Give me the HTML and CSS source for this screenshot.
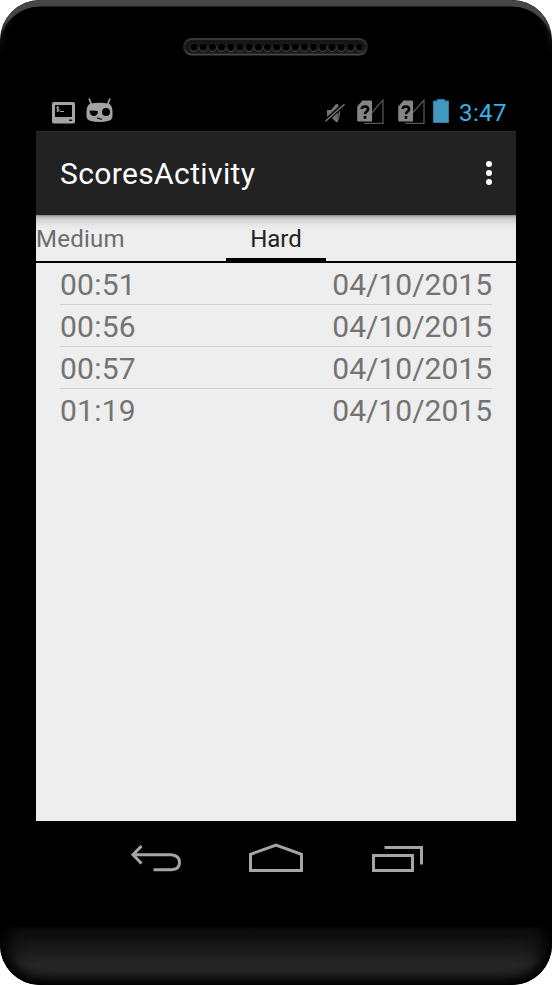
FILE: index.html
```html
<!DOCTYPE html>
<html lang="en">
<head>
<meta charset="utf-8">
<title>ScoresActivity</title>
<link rel="stylesheet" href="styles.css">
</head>
<body>
<div class="phone">
  <div class="top-bezel">
    <svg class="speaker" width="185" height="18" viewBox="0 0 185 18">
      <defs>
        <linearGradient id="rim" x1="0" y1="0" x2="0" y2="1"><stop offset="0" stop-color="#383838"/><stop offset=".5" stop-color="#202020"/><stop offset="1" stop-color="#444"/></linearGradient>
        <pattern id="holes" x="6.4" y="4" width="9.2" height="11" patternUnits="userSpaceOnUse">
          <circle cx="4.6" cy="5.9" r="4.2" fill="#484848"/><circle cx="4.6" cy="5" r="3.7" fill="#171717"/><circle cx="4.6" cy="5.400" r="3.300" fill="#000"/>
        </pattern>
      </defs>
      <rect x="1" y="1" width="183" height="15.500" rx="7.750" fill="#171717" stroke="url(#rim)" stroke-width="2"/>
      <rect x="6.400" y="4" width="174.800" height="11" fill="url(#holes)"/>
    </svg>
  </div>
  <div class="status-bar">
    <svg class="terminal" width="23" height="22" viewBox="0 0 23 22">
      <rect width="23" height="21.500" rx="1.800" fill="#a3a3a3"/>
      <rect x="3" y="3" width="17" height="12" fill="#000"/>
      <path d="M7 5H5v2h2v2H4.500M5.800 4v6M8 9.500h4" fill="none" stroke="#a3a3a3"/>
      <rect x="17" y="17.500" width="3" height="1.500" fill="#111"/>
    </svg>
    <svg class="cid" width="27" height="25" viewBox="0 0 27 25">
      <path d="M3 .5L5.300 6M24 .5L21.700 6" stroke="#a3a3a3" stroke-width="1.700"/>
      <path d="M4 5.800Q13.500 3.800 23 5.800Q26.500 7.500 26.500 14V18Q26.500 21.500 23 22.800Q13.500 25.300 4 22.800Q.5 21.500 .5 18V14Q.5 7.500 4 5.800Z" fill="#a3a3a3"/>
      <path d="M3.500 12.800Q7.500 12 12 13.300C12 19.500 3.800 19.800 3.500 12.800Z" fill="#000"/>
      <circle cx="20" cy="14" r="4" fill="#000"/>
      <path d="M11 20.200l2 .2 1.500.8H16" fill="none" stroke="#111" stroke-width="1.200"/>
    </svg>
    <span class="spacer"></span>
    <svg class="mute" width="20" height="22" viewBox="0 0 20 22">
      <path d="M2 8h4l5-6 2 0v18h-2l-5-5H2z" fill="#737373"/>
      <path d="M12 2Q15.500 6 14.500 12Q14 17 12 20Z" fill="#343434" stroke="#737373"/>
      <path d="M.5 19L19.500 2" stroke="#000" stroke-width="4"/>
      <path d="M.5 19.200L19.500 2.200" stroke="#777" stroke-width="1.500"/>
    </svg>
    <svg class="sim" width="27" height="25" viewBox="0 0 27 25">
      <path d="M7 24.400H26V1L14.500 14" fill="none" stroke="#555" stroke-width="1.300"/>
      <path d="M5.500 1.500H14Q15 1.500 15 2.500V22.500H1Q.2 22.500.2 21.500V7.500Z" fill="#858585"/>
      <path d="M4.700 10Q4.900 7.500 7.900 7.500Q11 7.500 11 10.200Q11 11.700 9.300 12.800Q8 13.700 8 15.200M8 17v2.700" fill="none" stroke="#000" stroke-width="2.600"/>
    </svg>
    <svg class="sim sim-two" width="27" height="25" viewBox="0 0 27 25">
      <path d="M7 24.400H26V1L14.500 14" fill="none" stroke="#555" stroke-width="1.300"/>
      <path d="M5.500 1.500H14Q15 1.500 15 2.500V22.500H1Q.2 22.500.2 21.500V7.500Z" fill="#858585"/>
      <path d="M4.700 10Q4.900 7.500 7.900 7.500Q11 7.500 11 10.200Q11 11.700 9.300 12.800Q8 13.700 8 15.200M8 17v2.700" fill="none" stroke="#000" stroke-width="2.600"/>
    </svg>
    <svg class="battery" width="16" height="24" viewBox="0 0 16 24"><path d="M4.300.5h7.400V2H15.500V23.500H.5V2H4.300Z" fill="#4099c0" stroke="#347d9d"/></svg>
    <span class="clock">3:47</span>
  </div>
  <div class="screen">
    <header class="app-bar">
      <h1>ScoresActivity</h1>
      <svg width="6" height="24" viewBox="0 0 6 24" fill="#fff"><circle cx="3" cy="3" r="3"/><circle cx="3" cy="12" r="3"/><circle cx="3" cy="21" r="3"/></svg>
    </header>
    <nav class="tabs">
      <span class="tab">Medium</span>
      <span class="tab selected">Hard</span>
    </nav>
    <ul class="scores">
      <li><span>00:51</span><span class="date">04/10/2015</span></li>
      <li><span>00:56</span><span class="date">04/10/2015</span></li>
      <li><span>00:57</span><span class="date">04/10/2015</span></li>
      <li><span>01:19</span><span class="date">04/10/2015</span></li>
    </ul>
  </div>
  <div class="nav-bar">
    <svg width="50" height="28" viewBox="0 0 50 28" fill="none" stroke="#a5a5a5" stroke-width="3"><path d="M10.500 1L2 9.700L10.500 18.500M2.500 9.700H40.500Q48.500 10.500 48.500 17.500T40.500 24.800H22.500"/></svg>
    <svg class="home" width="54" height="30" viewBox="0 0 54 30" fill="none" stroke="#a5a5a5" stroke-width="3"><path d="M1.500 27.500V11.300L27 2L52.500 11.300V27.500Z"/></svg>
    <svg width="52" height="28" viewBox="0 0 52 28" fill="none" stroke="#a5a5a5" stroke-width="3"><path d="M1.500 10.500H40.500V25.500H1.500ZM12.500 2.500H49.500V19.500"/></svg>
  </div>
  <div class="chin"></div>
</div>
</body>
</html>
```
FILE: styles.css
```css
* { box-sizing: border-box; }
body { margin: 0; background: #fff; font-family: Roboto, "Liberation Sans", sans-serif; }
.phone {
  width: 552px; height: 985px; overflow: hidden;
  border-radius: 40px; background: #000;
  display: flex; flex-direction: column;
}
.top-bezel {
  height: 93px; flex: none; padding: 38px 0 0 183px;
  border-radius: 40px 40px 0 0;
  box-shadow: inset 0 7px 0 -0.5px #464646, inset 7px 3px 6px -5px #262626, inset -7px 3px 6px -5px #262626;
  -webkit-mask-image: linear-gradient(#000 20%, transparent 60%), linear-gradient(#000, #000);
  mask-image: linear-gradient(#000 20%, transparent 60%), linear-gradient(#000, #000);
  -webkit-mask-size: 100% 100%, 400px 100%;
  mask-size: 100% 100%, 400px 100%;
  -webkit-mask-position: 0 0, center;
  mask-position: 0 0, center;
  -webkit-mask-repeat: no-repeat;
  mask-repeat: no-repeat;
}
.speaker { display: block; }
.status-bar {
  height: 38px; flex: none; padding: 5px 45px 0 52px;
  display: flex; align-items: flex-start;
}
.spacer { flex: 1; }
.terminal { margin-top: 4px; }
.cid { margin: 0 0 0 10.5px; }
.mute { margin: 4px 12px 0 0; }
.sim { margin-top: 1px; }
.sim-two { margin-left: 14px; }
.battery { margin: 1px 10px 0 8px; }
.clock { width: 48px; color: #33b5e5; font-size: 24px; line-height: 30px; letter-spacing: 0.4px; white-space: nowrap; }
.screen {
  width: 480px; height: 690px; flex: none; margin: 0 auto;
  background: #eee; display: flex; flex-direction: column;
}
.app-bar {
  height: 84px; padding: 0 24px; flex: none;
  background: #222; border-top: 1px solid #2a2a2a;
  display: flex; align-items: center; justify-content: space-between;
}
.app-bar h1 { margin: 0; color: #fff; font-size: 30px; line-height: 36px; font-weight: 400; letter-spacing: 0.37px; }
.app-bar svg { margin-bottom: 2px; }
.tabs {
  height: 48px; flex: none; border-bottom: 2px solid #000;
  background: linear-gradient(#8b8787 0, #b9b9b9 2px, #d4d4d4 5px, #e6e6e6 10px, #eee 15px);
  display: flex; justify-content: space-between; padding-right: 190px;
}
.tab { font-size: 24px; line-height: 48px; color: #6c6c6c; letter-spacing: 0.25px; }
.tab.selected { width: 100px; height: 48px; text-align: center; color: #222; letter-spacing: 0; border-bottom: 5px solid #000; }
.scores { list-style: none; margin: 0; padding: 0 24px; }
.scores li {
  height: 42px; border-bottom: 1px solid #d2d2d2;
  display: flex; justify-content: space-between;
  font-size: 30px; line-height: 43px; color: #737373;
  letter-spacing: 0.25px;
}
.scores .date { letter-spacing: 0; }
.scores li:last-child { border-bottom: 0; }
.nav-bar {
  height: 106px; flex: none; padding: 22px 128px 0 131px;
  display: flex; align-items: flex-start; justify-content: space-between;
}
.nav-bar svg { margin-top: 2px; }
.nav-bar .home { margin: 0 1px 0 0; }
.chin {
  flex: 1; border-radius: 0 0 40px 40px;
  background: linear-gradient(#0b0b0b, #171717 35%, #272727 65%, #272727);
  box-shadow: inset 0 -12px 12px -5px #000, inset 16px 0 16px -8px #000, inset -16px 0 16px -8px #000;
}
```
